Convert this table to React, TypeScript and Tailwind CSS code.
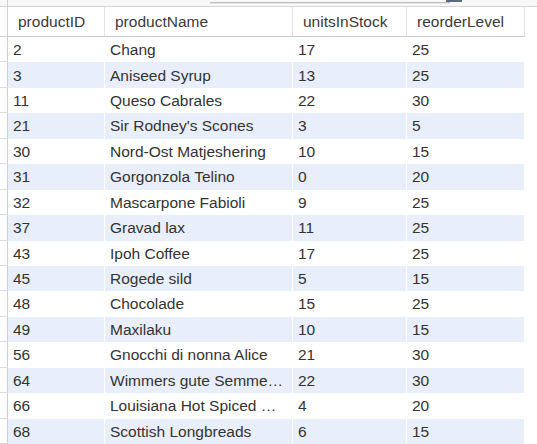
import React from 'react';

type Product = {
  productID: number;
  productName: string;
  unitsInStock: number;
  reorderLevel: number;
};

// names are shown as the grid clipped them
const products: Product[] = [
  { productID: 2, productName: 'Chang', unitsInStock: 17, reorderLevel: 25 },
  { productID: 3, productName: 'Aniseed Syrup', unitsInStock: 13, reorderLevel: 25 },
  { productID: 11, productName: 'Queso Cabrales', unitsInStock: 22, reorderLevel: 30 },
  { productID: 21, productName: "Sir Rodney's Scones", unitsInStock: 3, reorderLevel: 5 },
  { productID: 30, productName: 'Nord-Ost Matjeshering', unitsInStock: 10, reorderLevel: 15 },
  { productID: 31, productName: 'Gorgonzola Telino', unitsInStock: 0, reorderLevel: 20 },
  { productID: 32, productName: 'Mascarpone Fabioli', unitsInStock: 9, reorderLevel: 25 },
  { productID: 37, productName: 'Gravad lax', unitsInStock: 11, reorderLevel: 25 },
  { productID: 43, productName: 'Ipoh Coffee', unitsInStock: 17, reorderLevel: 25 },
  { productID: 45, productName: 'Rogede sild', unitsInStock: 5, reorderLevel: 15 },
  { productID: 48, productName: 'Chocolade', unitsInStock: 15, reorderLevel: 25 },
  { productID: 49, productName: 'Maxilaku', unitsInStock: 10, reorderLevel: 15 },
  { productID: 56, productName: 'Gnocchi di nonna Alice', unitsInStock: 21, reorderLevel: 30 },
  { productID: 64, productName: 'Wimmers gute Semme\u2026', unitsInStock: 22, reorderLevel: 30 },
  { productID: 66, productName: 'Louisiana Hot Spiced \u2026', unitsInStock: 4, reorderLevel: 20 },
  { productID: 68, productName: 'Scottish Longbreads', unitsInStock: 6, reorderLevel: 15 },
];

const headers = [
  { label: 'productID', width: 'w-[97px]' },
  { label: 'productName', width: 'w-[188px]' },
  { label: 'unitsInStock', width: 'w-[114px]' },
  { label: 'reorderLevel', width: 'w-[118px]' },
];

export default function App() {
  return (
    <div
      className="w-[537px] h-[444px] overflow-hidden bg-white text-[#333] text-[15.5px]"
      style={{ fontFamily: '"Liberation Sans", Arial, sans-serif' }}
    >
      {/* toolbar strip / scroll remnant */}
      <div className="h-[7px] bg-[#f8f8f8] border-b border-[#d4d4d4] flex">
        <div className="w-[8px] border-r border-[#cfcfcf]" />
        <div className="w-[202px]" />
        <div className="flex flex-col w-[240px]">
          <div className="h-[2px] flex justify-end">
            <div className="w-[16px] bg-[#5a6a80] mr-[-12px]" />
          </div>
          <div className="h-[1px] bg-[#bdbdbd]" />
          <div className="h-[1px] bg-[#e6e6e6]" />
        </div>
      </div>

      {/* header row */}
      <div className="flex h-[30px]">
        <div className="w-[8px] border-r border-[#cfcfcf] border-b border-b-[#d4d4d4]" />
        <div className="flex w-[517px] border-b border-[#c9c9c9]">
          {headers.map((h) => (
            <div
              key={h.label}
              className={`${h.width} flex items-center pl-[10px] pt-[1px] border-r border-[#e4e4e4] text-[#3a3a3a]`}
            >
              {h.label}
            </div>
          ))}
        </div>
      </div>

      {/* data rows */}
      {products.map((p, i) => {
        const striped = i % 2 === 1;
        const cell = `flex items-center pl-[5px] border-r border-white whitespace-nowrap ${
          striped ? 'bg-[#e9effa]' : 'bg-white'
        }`;
        return (
          <div key={p.productID} className="flex h-[25.45px]">
            <div className="w-[8px] border-r border-[#cfcfcf] border-b border-b-[#dcdcdc]" />
            <div className={`${cell} w-[97px]`}>{p.productID}</div>
            <div className={`${cell} w-[188px]`}>{p.productName}</div>
            <div className={`${cell} w-[114px]`}>{p.unitsInStock}</div>
            <div className={`${cell} w-[118px]`}>{p.reorderLevel}</div>
          </div>
        );
      })}
    </div>
  );
}
